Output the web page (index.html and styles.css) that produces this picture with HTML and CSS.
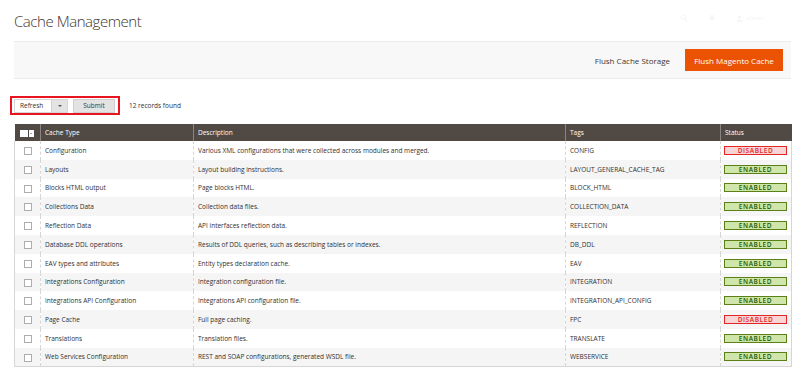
FILE: index.html
```html
<!DOCTYPE html>
<html>
<head>
<meta charset="utf-8">
<link rel="stylesheet" href="styles.css">
</head>
<body>
<div class="page">
  <header class="topbar">
    <h1 class="title">Cache Management</h1>
    <div class="actions-faint">
      <svg width="8" height="8" viewBox="0 0 8 8"><circle cx="3.2" cy="3.2" r="2.3" fill="none" stroke="currentColor" stroke-width="1"/><path d="M5 5 L7.5 7.5" stroke="currentColor" stroke-width="1.2"/></svg>
      <svg width="8" height="8" viewBox="0 0 8 8"><path d="M1 6 L7 6 L6 5 L6 3 A2 2 0 0 0 2 3 L2 5 Z" fill="currentColor"/></svg>
      <span class="faint-user"><svg width="7" height="7" viewBox="0 0 8 8"><circle cx="4" cy="2.5" r="1.8" fill="currentColor"/><path d="M0.5 8 A3.5 3 0 0 1 7.5 8 Z" fill="currentColor"/></svg> admin</span>
    </div>
  </header>
  <div class="page-actions">
    <button class="link-btn">Flush Cache Storage</button>
    <button class="primary-btn">Flush Magento Cache</button>
  </div>
  <div class="toolbar">
    <div class="massaction">
      <div class="select"><span>Refresh</span><span class="select-arrow"></span></div>
      <button class="submit">Submit</button>
    </div>
    <span class="records">12 records found</span>
  </div>
  <table class="grid">
    <colgroup>
      <col class="c-check"><col class="c-type"><col class="c-desc"><col class="c-tags"><col class="c-status">
    </colgroup>
    <thead>
      <tr>
        <th><span class="mass-check"><span class="mc-box"></span><span class="mc-arrow"></span></span></th>
        <th>Cache Type</th><th>Description</th><th>Tags</th><th>Status</th>
      </tr>
    </thead>
    <tbody>
      <tr><td><span class="cb"></span></td><td>Configuration</td><td>Various XML configurations that were collected across modules and merged.</td><td>CONFIG</td><td><span class="badge off">DISABLED</span></td></tr>
      <tr><td><span class="cb"></span></td><td>Layouts</td><td>Layout building instructions.</td><td>LAYOUT_GENERAL_CACHE_TAG</td><td><span class="badge on">ENABLED</span></td></tr>
      <tr><td><span class="cb"></span></td><td>Blocks HTML output</td><td>Page blocks HTML.</td><td>BLOCK_HTML</td><td><span class="badge on">ENABLED</span></td></tr>
      <tr><td><span class="cb"></span></td><td>Collections Data</td><td>Collection data files.</td><td>COLLECTION_DATA</td><td><span class="badge on">ENABLED</span></td></tr>
      <tr><td><span class="cb"></span></td><td>Reflection Data</td><td>API interfaces reflection data.</td><td>REFLECTION</td><td><span class="badge on">ENABLED</span></td></tr>
      <tr><td><span class="cb"></span></td><td>Database DDL operations</td><td>Results of DDL queries, such as describing tables or indexes.</td><td>DB_DDL</td><td><span class="badge on">ENABLED</span></td></tr>
      <tr><td><span class="cb"></span></td><td>EAV types and attributes</td><td>Entity types declaration cache.</td><td>EAV</td><td><span class="badge on">ENABLED</span></td></tr>
      <tr><td><span class="cb"></span></td><td>Integrations Configuration</td><td>Integration configuration file.</td><td>INTEGRATION</td><td><span class="badge on">ENABLED</span></td></tr>
      <tr><td><span class="cb"></span></td><td>Integrations API Configuration</td><td>Integrations API configuration file.</td><td>INTEGRATION_API_CONFIG</td><td><span class="badge on">ENABLED</span></td></tr>
      <tr><td><span class="cb"></span></td><td>Page Cache</td><td>Full page caching.</td><td>FPC</td><td><span class="badge off">DISABLED</span></td></tr>
      <tr><td><span class="cb"></span></td><td>Translations</td><td>Translation files.</td><td>TRANSLATE</td><td><span class="badge on">ENABLED</span></td></tr>
      <tr><td><span class="cb"></span></td><td>Web Services Configuration</td><td>REST and SOAP configurations, generated WSDL file.</td><td>WEBSERVICE</td><td><span class="badge on">ENABLED</span></td></tr>
    </tbody>
  </table>
</div>
</body>
</html>
```
FILE: styles.css
```css
* { box-sizing: border-box; }
html, body { margin: 0; padding: 0; background: #fff; }
body { font-family: "Open Sans", "Liberation Sans", sans-serif; color: #303030; }
.page { padding: 0 9px 0 14px; }

.topbar { display: flex; justify-content: space-between; align-items: flex-start; height: 41px; }
.title { margin: 11px 0 0; font-size: 15px; font-weight: 300; color: #41362f; letter-spacing: -0.45px; line-height: 20px; }
.actions-faint { display: flex; gap: 20px; align-items: center; margin: 14px 27px 0 0; color: #f5f5f5; font-size: 6px; }
.faint-user { display: flex; gap: 3px; align-items: center; }

.page-actions { display: flex; justify-content: flex-end; align-items: center; gap: 15px; height: 38px; background: #f8f8f8; border-top: 1px solid #ececec; border-bottom: 1px solid #ececec; padding-right: 8px; }
.link-btn { border: 0; background: none; font-family: inherit; font-size: 8px; color: #41362f; padding: 0; }
.primary-btn { border: 0; background: #eb5202; color: #fff; font-family: inherit; font-size: 8px; height: 22px; width: 98px; padding: 0; }

.toolbar { display: flex; align-items: center; gap: 9px; margin: 17px 0 0 -4px; height: 19px; }
.massaction { display: flex; align-items: center; gap: 5px; border: 2px solid #e8141f; padding: 1px 3px 1px 2px; height: 19px; }
.select { display: flex; align-items: center; height: 14px; width: 54px; border: 1px solid #d6d6d6; background: #fff; font-size: 6.5px; color: #303030; }
.select span:first-child { flex: 1; padding-left: 5px; }
.select-arrow { width: 16px; height: 12px; background: #e3e3e3; border-left: 1px solid #d0d0d0; position: relative; }
.select-arrow::after { content: ""; position: absolute; left: 6px; top: 5px; border-left: 2px solid transparent; border-right: 2px solid transparent; border-top: 2px solid #555; }
.submit { height: 14px; width: 42px; border: 1px solid #cfcfcf; background: #e3e3e3; font-family: inherit; font-size: 6.5px; color: #41362f; padding: 0; }
.records { font-size: 6.5px; color: #303030; }

.grid { width: 777px; margin-top: 9px; border-collapse: collapse; table-layout: fixed; font-size: 6.5px; }
.c-check { width: 26px; }
.c-type { width: 153px; }
.c-desc { width: 372px; }
.c-tags { width: 155px; }
.c-status { width: 71px; }
.grid th { background: #514943; color: #fff; font-weight: 400; text-align: left; height: 17px; padding: 0 4px; border-left: 1px solid #8a837f; font-size: 6.5px; }
.grid th:first-child { border-left: 0; padding: 0 0 0 5px; }
.grid td { height: 18.8px; padding: 0 4px; color: #303030; border-left: 1px dashed #d6d6d6; white-space: nowrap; overflow: hidden; }
.grid td:first-child { border-left: 1px solid #d6d6d6; text-align: center; padding: 0; }
.grid td:last-child { border-right: 1px solid #d6d6d6; padding: 0 4px 0 3px; }
.grid tbody tr:nth-child(even) td { background: #f5f5f5; }
.grid tbody tr:last-child td { border-bottom: 1px solid #d6d6d6; }

.mass-check { display: inline-flex; align-items: center; height: 7px; vertical-align: middle; }
.mc-box { width: 8px; height: 7px; background: #fff; }
.mc-arrow { width: 5px; height: 7px; background: #fff; margin-left: 1px; position: relative; }
.mc-arrow::after { content: ""; position: absolute; left: 1px; top: 3px; border-left: 1.5px solid transparent; border-right: 1.5px solid transparent; border-top: 1.5px solid #514943; }

.cb { display: inline-block; width: 8px; height: 8px; border: 1px solid #adadad; background: #fff; vertical-align: middle; }

.badge { display: block; height: 9px; width: 63px; border: 1px solid; text-align: center; font-size: 6.5px; font-weight: 600; line-height: 7px; letter-spacing: 0.6px; }
.badge.off { background: #f9d4d4; border-color: #e22626; color: #e22626; }
.badge.on { background: #d0e5a9; border-color: #5b8116; color: #185b00; }
```
